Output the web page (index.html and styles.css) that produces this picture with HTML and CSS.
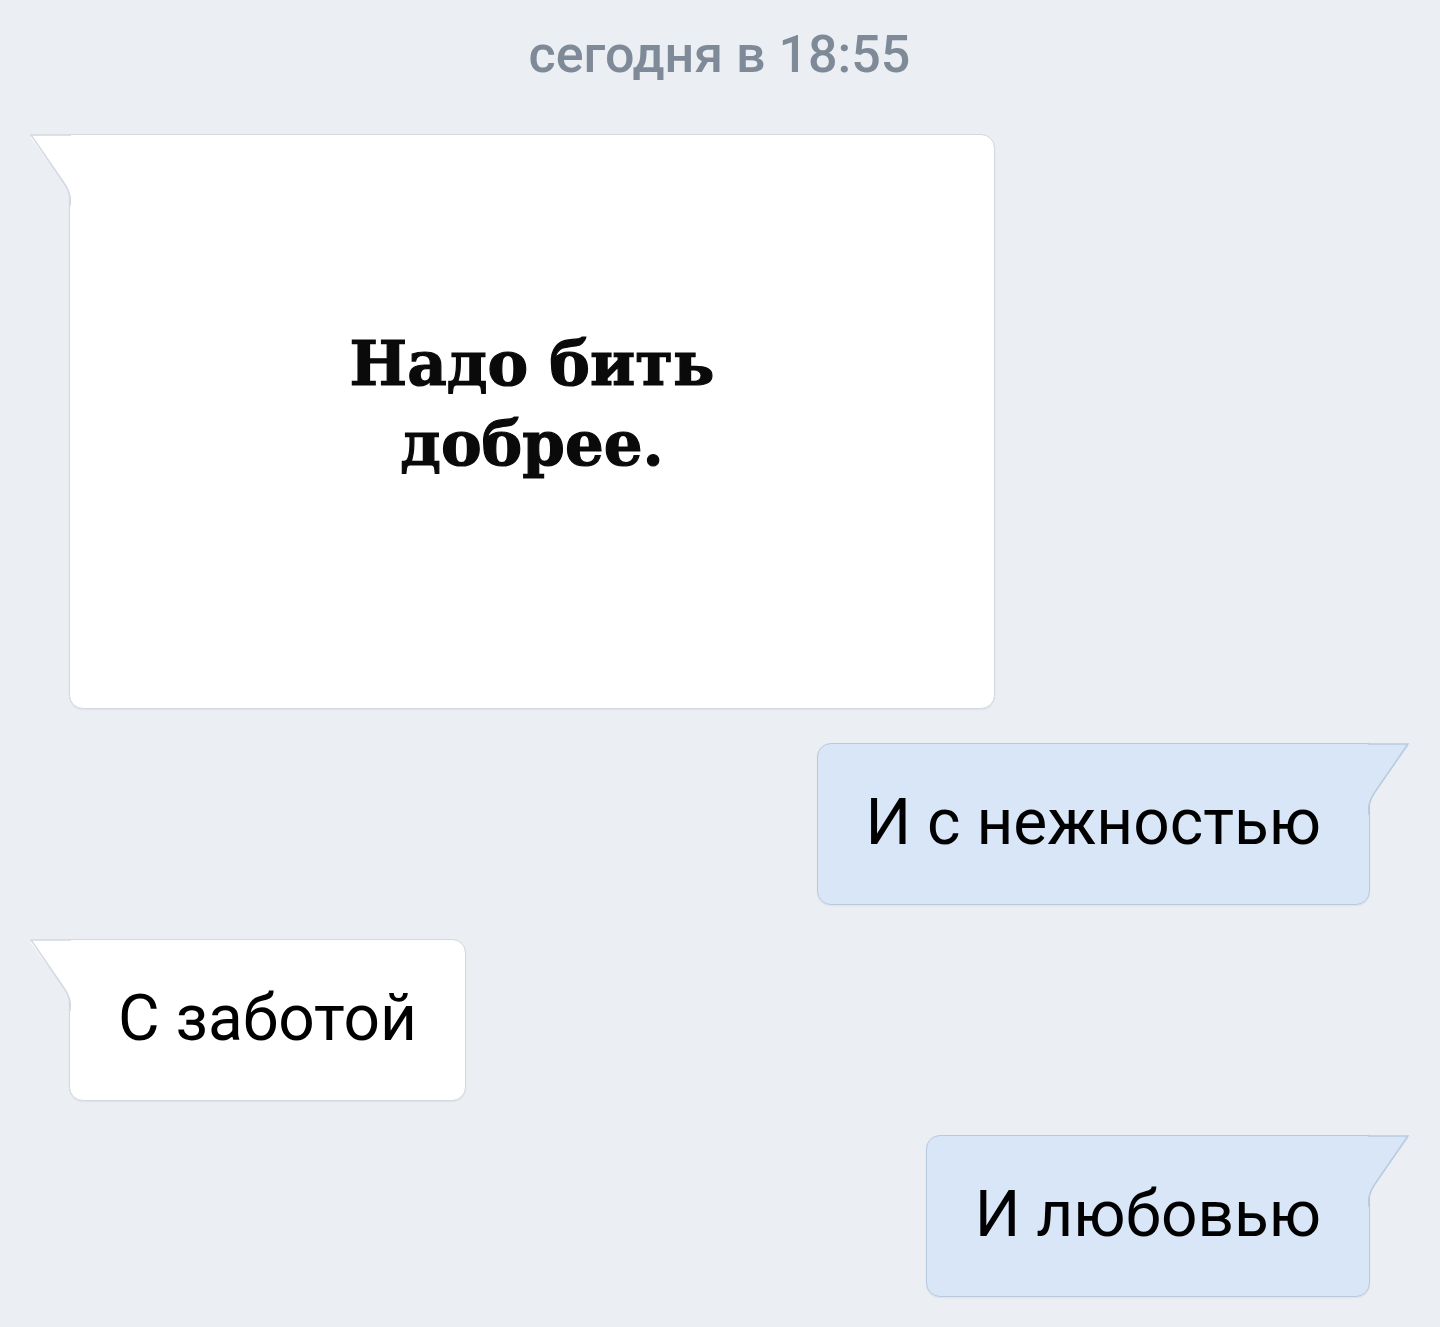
FILE: index.html
```html
<!DOCTYPE html>
<html lang="ru">
<head>
    <meta charset="UTF-8">
    <meta name="viewport" content="width=device-width, initial-scale=1.0">
    <title>Сообщения</title>
    <link rel="stylesheet" href="styles.css">
</head>
<body>

<div class="chat">
    <div class="date">сегодня в 18:55</div>

    <div class="row in">
        <div class="bubble picture">
            <svg class="tail" viewBox="0 0 41 72" width="41" height="72">
                <path d="M1 1 L41 1 L41 72 C41 62 39 56 34 49 L1 4 Z" class="tail-fill"/>
                <path d="M41 1 L1 1 L34 49 C39 56 41 62 41 72" class="tail-line"/>
            </svg>
            <p class="poster">Надо бить<br>добрее.</p>
        </div>
    </div>

    <div class="row out">
        <div class="bubble">
            <svg class="tail" viewBox="0 0 41 72" width="41" height="72">
                <path d="M40 1 L0 1 L0 72 C0 62 2 56 7 49 L40 4 Z" class="tail-fill"/>
                <path d="M0 1 L40 1 L7 49 C2 56 0 62 0 72" class="tail-line"/>
            </svg>
            <span class="text">И с нежностью</span>
        </div>
    </div>

    <div class="row in">
        <div class="bubble">
            <svg class="tail" viewBox="0 0 41 72" width="41" height="72">
                <path d="M1 1 L41 1 L41 72 C41 62 39 56 34 49 L1 4 Z" class="tail-fill"/>
                <path d="M41 1 L1 1 L34 49 C39 56 41 62 41 72" class="tail-line"/>
            </svg>
            <span class="text">С заботой</span>
        </div>
    </div>

    <div class="row out">
        <div class="bubble">
            <svg class="tail" viewBox="0 0 41 72" width="41" height="72">
                <path d="M40 1 L0 1 L0 72 C0 62 2 56 7 49 L40 4 Z" class="tail-fill"/>
                <path d="M0 1 L40 1 L7 49 C2 56 0 62 0 72" class="tail-line"/>
            </svg>
            <span class="text">И любовью</span>
        </div>
    </div>
</div>

</body>
</html>
```

FILE: styles.css
```css
body {
    margin: 0;
    background-color: #ebeef3;
    font-family: Roboto, "Liberation Sans", sans-serif;
}
.chat {
    display: flex;
    flex-direction: column;
    gap: 34px;
    padding: 22px 70px 30px 69px;
}
.date {
    text-align: center;
    font-size: 52px;
    font-weight: 500;
    color: #7f8a98;
    line-height: 66px;
    margin-bottom: 12px;
}
.row {
    display: flex;
}
.row.out {
    justify-content: flex-end;
}
.bubble {
    position: relative;
    box-sizing: border-box;
    background-color: #ffffff;
    border: 1px solid #d3d9e1;
    border-radius: 14px;
    box-shadow: 0 1px 2px rgba(0, 0, 0, 0.06);
    height: 162px;
    display: flex;
    align-items: center;
    padding: 0 48px 2px 48px;
}
.in .bubble {
    border-top-left-radius: 0;
}
.out .bubble {
    background-color: #d8e6f7;
    border-color: #b9cadf;
    border-top-right-radius: 0;
}
.tail {
    position: absolute;
    top: -1px;
}
.in .tail {
    left: -40px;
}
.out .tail {
    right: -40px;
}
.tail-fill {
    fill: #ffffff;
}
.tail-line {
    fill: none;
    stroke: #d3d9e1;
    stroke-width: 1.5;
}
.out .tail-fill {
    fill: #d8e6f7;
}
.out .tail-line {
    stroke: #b9cadf;
}
.text {
    font-size: 64px;
    color: #000000;
    line-height: 1;
}
.bubble.picture {
    width: 926px;
    height: 575px;
    padding: 0;
    justify-content: center;
}
.poster {
    margin: 0 0 36px 0;
    text-align: center;
    font-family: "DejaVu Serif", "Liberation Serif", serif;
    font-weight: bold;
    font-size: 61px;
    line-height: 80px;
    color: #0a0a0a;
    -webkit-text-stroke: 1.2px #0a0a0a;
}
```
